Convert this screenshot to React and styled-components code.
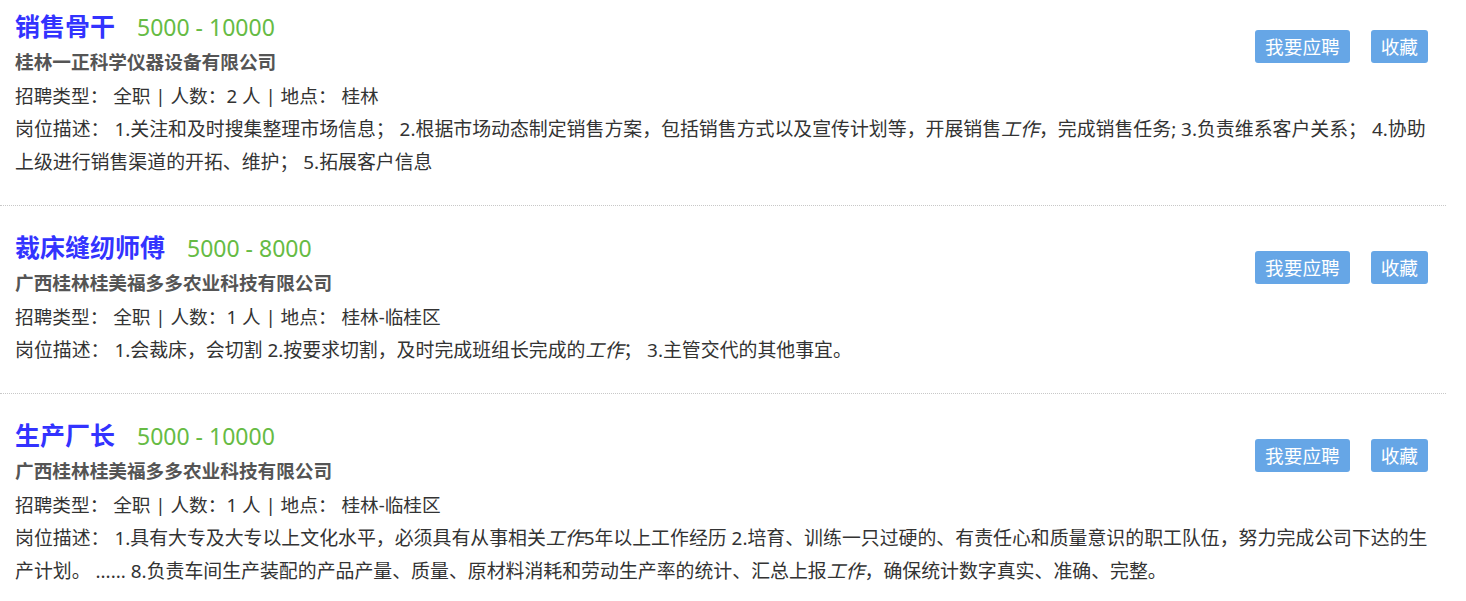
import React from "react";
import styled, { createGlobalStyle } from "styled-components";

const GlobalStyle = createGlobalStyle`
  body {
    margin: 0;
    background: #fff;
    font-family: "Noto Sans", "Noto Sans CJK SC", sans-serif;
    color: #333;
  }
`;

const jobs = [
  {
    title: "销售骨干",
    salary: "5000 - 10000",
    company: "桂林一正科学仪器设备有限公司",
    count: 2,
    place: "桂林",
    desc: (
      <>
        1.关注和及时搜集整理市场信息； 2.根据市场动态制定销售方案，包括销售方式以及宣传计划等，开展销售<em>工作</em>，完成销售任务; 3.负责维系客户关系；
        4.协助上级进行销售渠道的开拓、维护； 5.拓展客户信息
      </>
    ),
  },
  {
    title: "裁床缝纫师傅",
    salary: "5000 - 8000",
    company: "广西桂林桂美福多多农业科技有限公司",
    count: 1,
    place: "桂林-临桂区",
    desc: (
      <>
        1.会裁床，会切割 2.按要求切割，及时完成班组长完成的<em>工作</em>； 3.主管交代的其他事宜。
      </>
    ),
  },
  {
    title: "生产厂长",
    salary: "5000 - 10000",
    company: "广西桂林桂美福多多农业科技有限公司",
    count: 1,
    place: "桂林-临桂区",
    desc: (
      <>
        1.具有大专及大专以上文化水平，必须具有从事相关<em>工作</em>5年以上工作经历 2.培育、训练一只过硬的、有责任心和质量意识的职工队伍，努力完成公司下达的生产计划。 ......
        8.负责车间生产装配的产品产量、质量、原材料消耗和劳动生产率的统计、汇总上报<em>工作</em>，确保统计数字真实、准确、完整。
      </>
    ),
  },
];

const List = styled.ul`
  list-style: none;
  margin: 0;
  padding: 0;
  width: 1446px;
`;

const Item = styled.li`
  padding: 24px 18px 26px 15px;
  border-bottom: 1px dotted #c8c8c8;
  font-size: 18.67px;

  &:first-child {
    padding-top: 9px;
  }
  &:last-child {
    border-bottom: none;
  }
  &::after {
    content: "";
    display: block;
    clear: both;
  }
`;

const Actions = styled.div`
  float: right;
  margin-top: 21px;
  display: flex;
  gap: 21px;
`;

const Button = styled.button`
  height: 33px;
  padding: 0 10px;
  border: none;
  border-radius: 3px;
  background: #66a6e6;
  color: #fff;
  font-family: inherit;
  font-size: 18.67px;
  line-height: 33px;
  cursor: pointer;
`;

const Head = styled.div`
  display: flex;
  align-items: baseline;
  height: 36px;
  line-height: 35px;
`;

const Title = styled.a`
  font-size: 25px;
  font-weight: bold;
  color: #3333ff;
  text-decoration: none;
`;

const Salary = styled.span`
  margin-left: 22px;
  font-size: 23px;
  color: #66bb44;
`;

const Company = styled.div`
  font-weight: bold;
  color: #555;
  line-height: 34px;
`;

const Meta = styled.div`
  line-height: 34px;
`;

const Desc = styled.p`
  margin: 0;
  font-size: 18.9px;
  line-height: 33px;

  em {
    font-style: italic;
  }
`;

export default function App() {
  return (
    <>
      <GlobalStyle />
      <List>
        {jobs.map((job) => (
          <Item key={job.title}>
            <Actions>
              <Button>我要应聘</Button>
              <Button>收藏</Button>
            </Actions>
            <Head>
              <Title href="#">{job.title}</Title>
              <Salary>{job.salary}</Salary>
            </Head>
            <Company>{job.company}</Company>
            <Meta>
              招聘类型： 全职 | 人数：{job.count} 人 | 地点： {job.place}
            </Meta>
            <Desc>岗位描述： {job.desc}</Desc>
          </Item>
        ))}
      </List>
    </>
  );
}
